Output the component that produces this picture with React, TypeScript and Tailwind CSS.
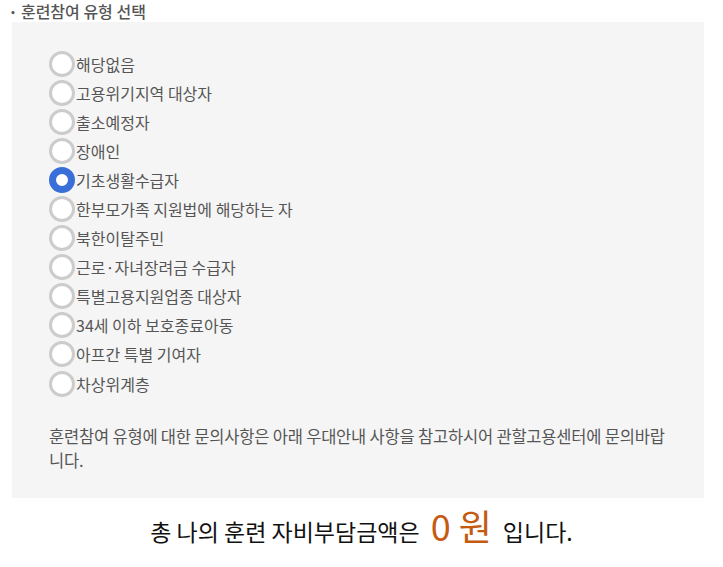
const options = [
  "해당없음",
  "고용위기지역 대상자",
  "출소예정자",
  "장애인",
  "기초생활수급자",
  "한부모가족 지원법에 해당하는 자",
  "북한이탈주민",
  "근로·자녀장려금 수급자",
  "특별고용지원업종 대상자",
  "34세 이하 보호종료아동",
  "아프간 특별 기여자",
  "차상위계층",
];

const font = "font-['Noto_Sans_CJK_KR','Noto_Sans',sans-serif]";

const App = () => {
  const selected = 4;
  return (
    <div className={`w-[723px] h-[567px] bg-white ${font}`}>
      <div className="flex items-center h-[22px] pl-[11px] text-[16px] font-medium text-[#555] leading-none">
        <span className="mr-[6px] text-[11px]">•</span>
        <span>훈련참여 유형 선택</span>
      </div>

      <div className="ml-[12px] w-[692px] h-[476px] bg-[#f5f5f5] pl-[37px] pr-4 pt-[27px]">
        <ul className="flex flex-col">
          {options.map((label, i) => (
            <li key={label} className="flex items-center h-[29.1px]">
              {i === selected ? (
                <span className="w-[26px] h-[26px] rounded-full border-[7px] border-[#3a6fd9] bg-white shrink-0" />
              ) : (
                <span className="w-[26px] h-[26px] rounded-full border-[3px] border-[#cccccc] bg-white shrink-0" />
              )}
              <span className="ml-[1px] text-[16px] text-[#555]">{label}</span>
            </li>
          ))}
        </ul>
        <p className="mt-[26px] w-[626px] text-[16.5px] leading-[24px] text-[#555] tracking-[-0.2px]">
          훈련참여 유형에 대한 문의사항은 아래 우대안내 사항을 참고하시어 관할고용센터에 문의바랍니다.
        </p>
      </div>

      <div className="flex items-baseline justify-center h-[69px] pt-0 text-[23px] text-[#111]">
        <span>총 나의 훈련 자비부담금액은</span>
        <span className="mx-[11px] text-[36px] text-[#c55a11]">0 원</span>
        <span>입니다.</span>
      </div>
    </div>
  );
};

export default App;
